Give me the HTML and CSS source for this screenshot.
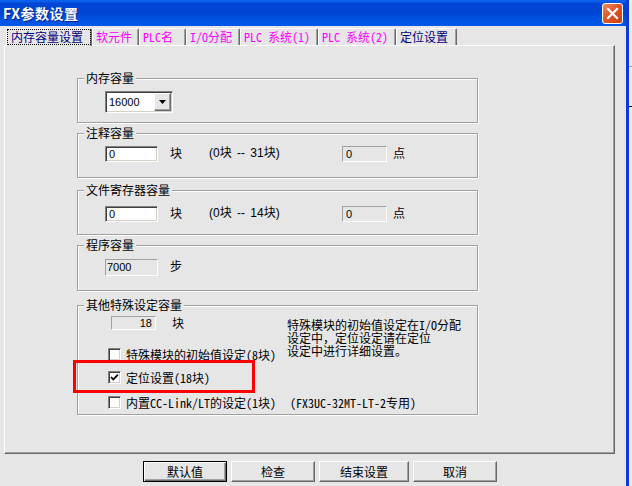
FILE: index.html
```html
<!DOCTYPE html>
<html lang="zh-CN">
<head>
    <meta charset="UTF-8">
    <title>FX参数设置</title>
    <link rel="stylesheet" href="styles.css">
</head>
<body>
    <div class="window">
        <div class="titlebar">
            <span class="title">FX参数设置</span>
            <span class="close-btn">
                <svg viewBox="0 0 19 19" width="19" height="19">
                    <path d="M5 5 L14 14 M14 5 L5 14" stroke="#fff" stroke-width="2.2" stroke-linecap="square"></path>
                </svg>
            </span>
        </div>

        <div class="tabs">
            <div class="tab tab-active"><span class="tab-focus">内存容量设置</span></div>
            <div class="tab">软元件</div>
            <div class="tab">PLC名</div>
            <div class="tab">I/O分配</div>
            <div class="tab">PLC 系统(1)</div>
            <div class="tab">PLC 系统(2)</div>
            <div class="tab tab-navy">定位设置</div>
        </div>

        <div class="panel">
            <div class="group group-memory">
                <span class="group-title">内存容量</span>
                <div class="row row-memory">
                    <div class="combo">
                        <span class="combo-value">16000</span>
                        <span class="combo-btn">
                            <svg viewBox="0 0 7 4" width="7" height="4"><path d="M0 0 H7 L3.5 4 Z" fill="#000"></path></svg>
                        </span>
                    </div>
                </div>
            </div>

            <div class="group group-comment">
                <span class="group-title">注释容量</span>
                <div class="row row-comment">
                    <span class="field">0</span>
                    <span class="unit">块</span>
                    <span class="range">(0块 -- 31块)</span>
                    <span class="field field-readonly">0</span>
                    <span class="unit-point">点</span>
                </div>
            </div>

            <div class="group group-file">
                <span class="group-title">文件寄存器容量</span>
                <div class="row row-file">
                    <span class="field">0</span>
                    <span class="unit">块</span>
                    <span class="range">(0块 -- 14块)</span>
                    <span class="field field-readonly">0</span>
                    <span class="unit-point">点</span>
                </div>
            </div>

            <div class="group group-program">
                <span class="group-title">程序容量</span>
                <div class="row row-program">
                    <span class="field field-readonly field-program">7000</span>
                    <span class="unit">步</span>
                </div>
            </div>

            <div class="group group-other">
                <span class="group-title">其他特殊设定容量</span>
                <div class="other-body">
                    <div class="other-left">
                        <div class="row row-count">
                            <span class="field field-readonly field-count">18</span>
                            <span class="unit-count">块</span>
                        </div>
                        <div class="check-row check-first">
                            <span class="check"></span>
                            <span>特殊模块的初始值设定(8块)</span>
                        </div>
                        <div class="check-row check-second">
                            <span class="check">
                                <svg viewBox="0 0 11 11" width="11" height="11"><path d="M2 5 L4.3 7.4 L9 2.6" fill="none" stroke="#000" stroke-width="1.8"></path></svg>
                            </span>
                            <span>定位设置(18块)</span>
                        </div>
                    </div>
                    <p class="note">特殊模块的初始值设定在I/O分配<br>设定中，定位设定请在定位<br>设定中进行详细设置。</p>
                </div>
                <div class="check-row check-third">
                    <span class="check"></span>
                    <span class="check-text-wide">内置CC-Link/LT的设定(1块)</span>
                    <span>(FX3UC-32MT-LT-2专用)</span>
                </div>
                <div class="highlight"></div>
            </div>
        </div>

        <div class="actions">
            <button class="btn btn-default">默认值</button>
            <button class="btn">检查</button>
            <button class="btn btn-wide">结束设置</button>
            <button class="btn">取消</button>
        </div>
    </div>
    <div class="side-strip"></div>
</body>
</html>
```

FILE: styles.css
```css
:root {
    --face: #e6e6e6;
    --shadow: #a0a0a0;
    --dark: #696969;
    --simsun: "Noto Sans Mono CJK SC", "Noto Sans CJK SC", sans-serif;
    --sans: "Liberation Sans", "Noto Sans CJK SC", sans-serif;
}

* {
    margin: 0;
    padding: 0;
    box-sizing: border-box;
}

body {
    display: flex;
    height: 486px;
    overflow: hidden;
    background-color: #ececec;
    color: #000;
    font-family: var(--simsun);
    font-size: 12px;
    line-height: 12px;
}

.window {
    flex: none;
    width: 629px;
    height: 486px;
    background-color: var(--face);
    border-right: 3px solid #0b3bd8;
}

.side-strip {
    flex: 1;
    background: linear-gradient(to bottom, #ececec 0 66px, #a0a0a0 66px 67px, #ececec 67px 106px, #000 106px 107px, #ececec 107px);
}

/* title bar */
.titlebar {
    height: 26px;
    display: flex;
    align-items: center;
    justify-content: space-between;
    padding: 0 3px;
    background: linear-gradient(to bottom, #0a62ee 0, #0a5ce8 2px, #0047d6 3px, #0044d2 12px, #0053e2 20px, #0058e8 26px);
}

.title {
    color: #fff;
    font-family: "Noto Sans CJK SC", sans-serif;
    font-weight: bold;
    font-size: 14px;
    letter-spacing: 0.5px;
    text-shadow: 1px 1px 0 #0a1e8a;
}

.close-btn {
    width: 21px;
    height: 21px;
    display: flex;
    align-items: center;
    justify-content: center;
    border: 1px solid #fff;
    border-radius: 3px;
    background: linear-gradient(135deg, #f08a62 0%, #e0552a 45%, #c8400f 100%);
}

/* tabs */
.tabs {
    display: flex;
    align-items: flex-start;
    height: 17px;
    margin-top: 2px;
    padding-left: 6px;
}

.tab {
    height: 17px;
    padding: 2px 0 0 3px;
    border-top: 1px solid #fff;
    border-left: 1px solid #fff;
    border-right: 1px solid var(--dark);
    box-shadow: inset -1px 0 0 var(--shadow);
    border-radius: 2px 2px 0 0;
    color: #f0f;
    white-space: nowrap;
}

.tab:nth-child(1) { width: 86px; }
.tab:nth-child(2) { width: 47px; }
.tab:nth-child(3) { width: 47px; }
.tab:nth-child(4) { width: 54px; }
.tab:nth-child(5) { width: 78px; }
.tab:nth-child(6) { width: 78px; }
.tab:nth-child(7) { width: 61px; }

.tab-active {
    position: relative;
    z-index: 1;
    height: 18px;
    padding: 1px 0 0 1px;
    background-color: var(--face);
    color: #000080;
}

.tab-focus {
    display: block;
    width: 82px;
    height: 14px;
    padding: 0 0 0 3px;
    outline: 1px dotted #000;
    line-height: 14px;
}

.tab-navy {
    color: #000080;
}

/* page panel */
.panel {
    width: 611px;
    height: 409px;
    margin-left: 4px;
    padding: 32px 0 0 72px;
    border-top: 1px solid #fff;
    border-left: 1px solid #fff;
    border-right: 1px solid var(--dark);
    border-bottom: 1px solid var(--dark);
    box-shadow: inset -1px -1px 0 var(--shadow);
}

.group {
    position: relative;
    width: 401px;
    border: 1px solid var(--shadow);
    box-shadow: inset 1px 1px 0 #fff, 1px 1px 0 #fff;
}

.group-memory { height: 45px; }
.group-comment { height: 45px; margin-top: 10px; }
.group-file { height: 45px; margin-top: 12px; }
.group-program { height: 46px; margin-top: 10px; }
.group-other { height: 110px; margin-top: 14px; }

.group-title {
    display: block;
    width: fit-content;
    margin: -7px 0 0 6px;
    padding: 0 2px;
    background-color: var(--face);
    line-height: 12px;
}

.row {
    display: flex;
    align-items: flex-start;
    margin-left: 27px;
}

.row-memory { margin-top: 7px; }
.row-comment { margin-top: 7px; }
.row-file { margin-top: 10px; }
.row-program { margin-top: 8px; }
.row-count { margin-top: 5px; margin-left: 33px; }

/* inputs */
.combo {
    width: 68px;
    height: 22px;
    display: flex;
    align-items: center;
    justify-content: space-between;
    padding: 1px 1px 1px 3px;
    background-color: #fff;
    border: 1px solid;
    border-color: #808080 #fff #fff #808080;
    box-shadow: inset 1px 1px 0 #404040, inset -1px -1px 0 #d4d0c8;
}

.combo-value {
    font-family: var(--sans);
    font-size: 11px;
}

.combo-btn {
    width: 17px;
    height: 18px;
    display: flex;
    align-items: center;
    justify-content: center;
    background-color: var(--face);
    border: 1px solid;
    border-color: #fff var(--dark) var(--dark) #fff;
    box-shadow: inset -1px -1px 0 var(--shadow);
}

.field {
    width: 53px;
    height: 16px;
    padding-left: 3px;
    background-color: #fff;
    border: 1px solid;
    border-color: #808080 #fff #fff #808080;
    box-shadow: inset 1px 1px 0 #404040, inset -1px -1px 0 #d4d0c8;
    font-family: var(--sans);
    font-size: 11px;
    line-height: 14px;
}

.field-readonly {
    width: 45px;
    background-color: var(--face);
    border-color: var(--shadow) #fff #fff var(--shadow);
    box-shadow: none;
}

.field-program {
    width: 53px;
    height: 17px;
    line-height: 15px;
    padding-left: 1px;
}

.field-count {
    height: 14px;
    line-height: 12px;
    padding-right: 3px;
    text-align: right;
}

.unit {
    width: 39px;
    margin-left: 12px;
    padding-top: 1px;
}

.range {
    width: 133px;
    padding-top: 1px;
    font-family: var(--sans);
    word-spacing: 2px;
}

.unit-point {
    margin-left: 6px;
    padding-top: 1px;
}

.unit-count {
    margin-left: 16px;
    padding-top: 1px;
}

/* other settings */
.other-body {
    display: flex;
    align-items: flex-start;
}

.other-left {
    width: 209px;
    flex: none;
}

.note {
    margin-top: 7px;
    line-height: 13px;
    white-space: nowrap;
}

.check-row {
    display: flex;
    align-items: center;
    height: 13px;
    margin-left: 30px;
    white-space: nowrap;
}

.check-first { margin-top: 18px; }
.check-second { margin-top: 10px; }
.check-third { margin-top: 12px; }

.check {
    width: 13px;
    height: 13px;
    margin-right: 5px;
    display: flex;
    align-items: center;
    justify-content: center;
    background-color: #fff;
    border: 1px solid;
    border-color: #808080 #fff #fff #808080;
    box-shadow: inset 1px 1px 0 #404040, inset -1px -1px 0 #d4d0c8;
}

.check-text-wide {
    width: 164px;
}

.highlight {
    position: absolute;
    left: -5px;
    top: 54px;
    width: 182px;
    height: 33px;
    border: 3px solid #f00;
}

/* dialog buttons */
.actions {
    display: flex;
    gap: 4px;
    margin-top: 7px;
    padding-left: 143px;
}

.btn {
    width: 84px;
    height: 21px;
    background-color: var(--face);
    border: 1px solid;
    border-color: #fff var(--dark) var(--dark) #fff;
    box-shadow: inset -1px -1px 0 var(--shadow);
    font-family: "Noto Sans CJK SC", sans-serif;
    font-size: 12px;
    color: #000;
}

.btn-default {
    border-color: #000;
    box-shadow: inset 1px 1px 0 #fff, inset -1px -1px 0 var(--dark), inset -2px -2px 0 var(--shadow);
}

.btn-wide {
    width: 90px;
}
```
